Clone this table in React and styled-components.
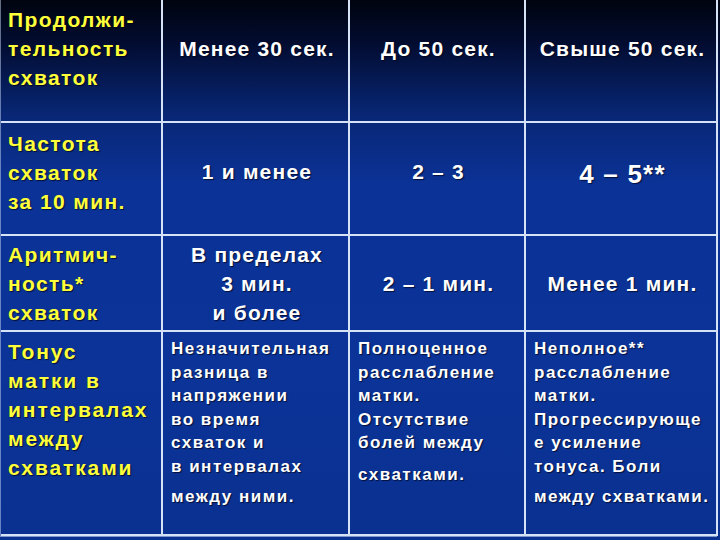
import React from 'react';
import styled, { createGlobalStyle } from 'styled-components';

const GlobalStyle = createGlobalStyle`
  html, body {
    margin: 0;
    padding: 0;
    width: 720px;
    height: 540px;
    overflow: hidden;
  }
  body {
    font-family: 'Liberation Sans', Arial, sans-serif;
    background: linear-gradient(
      180deg,
      #00040f 0%,
      #020c30 8%,
      #082674 21%,
      #0b3296 34%,
      #0b3398 70%,
      #0a3190 100%
    );
  }
`;

const Slide = styled.div`
  width: 720px;
  height: 540px;
  padding: 0 3px 0 0;
  box-sizing: border-box;
`;

const Table = styled.div`
  display: grid;
  grid-template-columns: 162px 187px 176px 192px;
  grid-template-rows: 123px 113px 96px 204px;
  border-left: 1px solid rgba(200, 215, 245, 0.5);
  border-bottom: 1px solid rgba(200, 215, 245, 0.6);
`;

const Cell = styled.div`
  box-sizing: border-box;
  border-right: 2px solid #d6e2f6;
  border-bottom: 2px solid #d6e2f6;
  padding: ${({ $top }) => $top || 5}px 4px 0 ${({ $left }) => $left || 7}px;
  text-align: ${({ $center }) => ($center ? 'center' : 'left')};
  font-weight: bold;
  white-space: nowrap;
  text-shadow: 1px 1px 1px rgba(0, 0, 20, 0.7);
`;

const Label = styled.div`
  color: #ffff3a;
  font-size: 21px;
  line-height: 29px;
  letter-spacing: ${({ $spaced }) => ($spaced ? '1.9px' : '1.4px')};
`;

const Value = styled.div`
  color: #ffffff;
  font-size: ${({ $size }) => $size || 21}px;
  line-height: 29px;
  letter-spacing: 1.2px;
`;

const Note = styled.div`
  color: #ffffff;
  font-size: 17px;
  line-height: 23.6px;
  letter-spacing: 1.5px;
`;

const Tail = styled(Note)`
  margin-top: ${({ $gap }) => $gap || 6}px;
`;

export default function App() {
  return (
    <>
      <GlobalStyle />
      <Slide>
        <Table>
          <Cell>
            <Label>
              Продолжи-
              <br />
              тельность
              <br />
              схваток
            </Label>
          </Cell>
          <Cell $center $top={34}>
            <Value>Менее 30 сек.</Value>
          </Cell>
          <Cell $center $top={34}>
            <Value>До 50 сек.</Value>
          </Cell>
          <Cell $center $top={34}>
            <Value>Свыше 50 сек.</Value>
          </Cell>

          <Cell $top={6}>
            <Label>
              Частота
              <br />
              схваток
              <br />
              за 10 мин.
            </Label>
          </Cell>
          <Cell $center $top={34}>
            <Value>1 и менее</Value>
          </Cell>
          <Cell $center $top={34}>
            <Value>2 – 3</Value>
          </Cell>
          <Cell $center $top={37}>
            <Value $size={26}>4 – 5**</Value>
          </Cell>

          <Cell $top={4}>
            <Label>
              Аритмич-
              <br />
              ность*
              <br />
              схваток
            </Label>
          </Cell>
          <Cell $center $top={4}>
            <Value>
              В пределах
              <br />
              3 мин.
              <br />
              и более
            </Value>
          </Cell>
          <Cell $center $top={33}>
            <Value>2 – 1 мин.</Value>
          </Cell>
          <Cell $center $top={33}>
            <Value>Менее 1 мин.</Value>
          </Cell>

          <Cell $top={5}>
            <Label $spaced>
              Тонус
              <br />
              матки в
              <br />
              интервалах
              <br />
              между
              <br />
              схватками
            </Label>
          </Cell>
          <Cell $top={5} $left={8}>
            <Note>
              Незначительная
              <br />
              разница в
              <br />
              напряжении
              <br />
              во время
              <br />
              схваток и
              <br />
              в интервалах
            </Note>
            <Tail>между ними.</Tail>
          </Cell>
          <Cell $top={5} $left={8}>
            <Note>
              Полноценное
              <br />
              расслабление
              <br />
              матки.
              <br />
              Отсутствие
              <br />
              болей между
            </Note>
            <Tail $gap={8}>схватками.</Tail>
          </Cell>
          <Cell $top={5} $left={8}>
            <Note>
              Неполное**
              <br />
              расслабление
              <br />
              матки.
              <br />
              Прогрессирующе
              <br />
              е усиление
              <br />
              тонуса. Боли
            </Note>
            <Tail>между схватками.</Tail>
          </Cell>
        </Table>
      </Slide>
    </>
  );
}
